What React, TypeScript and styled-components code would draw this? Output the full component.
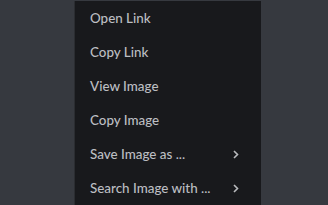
import React from 'react';
import styled, { createGlobalStyle } from 'styled-components';

const GlobalStyle = createGlobalStyle`
  body {
    margin: 0;
    background-color: #36393f;
    font-family: Lato, "Noto Sans", sans-serif;
  }
`;

const Page = styled.div`
  width: 328px;
  height: 205px;
  overflow: hidden;
  display: flex;
  align-items: flex-start;
  padding-left: 75px;
  box-sizing: border-box;
`;

const Menu = styled.div`
  width: 186px;
  margin-top: 1px;
  background-color: #18191c;
  display: flex;
  flex-direction: column;
  box-shadow: -1px 0 0 #2b2d31;
`;

const Item = styled.div`
  height: 34px;
  display: flex;
  align-items: center;
  justify-content: space-between;
  padding: 0 22px 0 15px;
  color: #bcbec2;
  font-size: 13.4px;
  font-weight: 500;
  cursor: pointer;
`;

const Chevron = () => (
  <svg width="6" height="9" viewBox="0 0 6 9" fill="none">
    <path d="M1 1l3.5 3.5L1 8" stroke="#b9bbbe" strokeWidth="1.6" />
  </svg>
);

const items: { label: string; submenu?: boolean }[] = [
  { label: 'Open Link' },
  { label: 'Copy Link' },
  { label: 'View Image' },
  { label: 'Copy Image' },
  { label: 'Save Image as ...', submenu: true },
  { label: 'Search Image with ...', submenu: true },
];

export default function App() {
  return (
    <Page>
      <GlobalStyle />
      <Menu>
        {items.map(item => (
          <Item key={item.label}>
            <span>{item.label}</span>
            {item.submenu && <Chevron />}
          </Item>
        ))}
      </Menu>
    </Page>
  );
}
